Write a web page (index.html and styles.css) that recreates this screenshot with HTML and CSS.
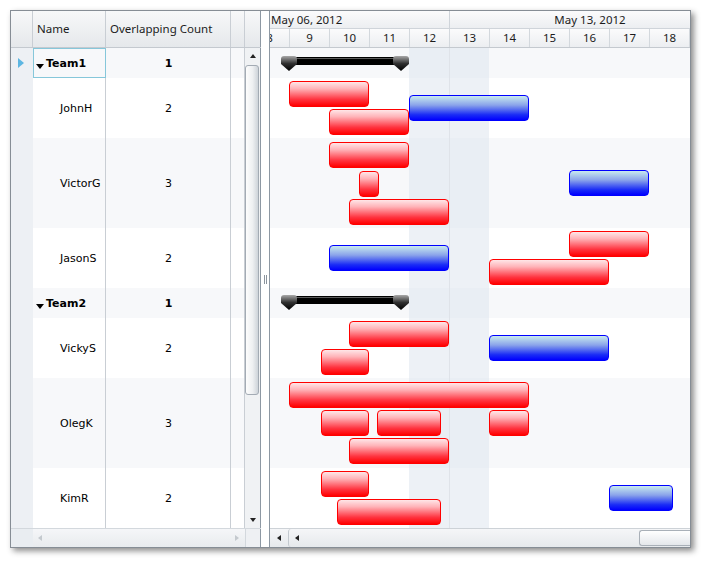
FILE: index.html
```html
<!DOCTYPE html>
<html>
<head>
    <meta name="viewport" content="width=device-width, initial-scale=1.0">
    <title>Gantt - Overlapping Tasks</title>
    <link rel="stylesheet" href="styles.css">
</head>
<body>
    <div class="gantt">
        <div class="grid">
            <div class="grid-head">
                <div class="hcell ind"></div>
                <div class="hcell name">Name</div>
                <div class="hcell count">Overlapping Count</div>
                <div class="hcell pad"></div>
                <div class="hcell vs"></div>
            </div>
            <div class="grid-body">
                <div class="rows">
                    <div class="row alt h30">
                        <div class="ind"><span class="cur"></span></div>
                        <div class="cell name group selected"><span class="tri"></span>Team1</div>
                        <div class="cell count group">1</div>
                        <div class="cell pad"></div>
                    </div>
                    <div class="row h60">
                        <div class="ind"></div>
                        <div class="cell name">JohnH</div>
                        <div class="cell count">2</div>
                        <div class="cell pad"></div>
                    </div>
                    <div class="row alt h90">
                        <div class="ind"></div>
                        <div class="cell name">VictorG</div>
                        <div class="cell count">3</div>
                        <div class="cell pad"></div>
                    </div>
                    <div class="row h60">
                        <div class="ind"></div>
                        <div class="cell name">JasonS</div>
                        <div class="cell count">2</div>
                        <div class="cell pad"></div>
                    </div>
                    <div class="row alt h30">
                        <div class="ind"></div>
                        <div class="cell name group"><span class="tri"></span>Team2</div>
                        <div class="cell count group">1</div>
                        <div class="cell pad"></div>
                    </div>
                    <div class="row h60">
                        <div class="ind"></div>
                        <div class="cell name">VickyS</div>
                        <div class="cell count">2</div>
                        <div class="cell pad"></div>
                    </div>
                    <div class="row alt h90">
                        <div class="ind"></div>
                        <div class="cell name">OlegK</div>
                        <div class="cell count">3</div>
                        <div class="cell pad"></div>
                    </div>
                    <div class="row h60">
                        <div class="ind"></div>
                        <div class="cell name">KimR</div>
                        <div class="cell count">2</div>
                        <div class="cell pad"></div>
                    </div>
                </div>
                <div class="vscroll">
                    <div class="sb-btn"><span class="arr up"></span></div>
                    <div class="thumb"></div>
                    <div class="sb-space"></div>
                    <div class="sb-btn"><span class="arr down"></span></div>
                </div>
            </div>
            <div class="grid-foot">
                <div class="gf-corner"></div>
                <div class="gf-track">
                    <span class="arr left faint"></span>
                    <span class="arr right faint"></span>
                </div>
                <div class="gf-corner2"></div>
            </div>
        </div>

        <div class="splitter"><span class="grip"></span></div>

        <div class="chart">
            <div class="weeks">
                <div class="week first">May 06, 2012</div>
                <div class="week second">May 13, 2012</div>
            </div>
            <div class="days" id="days"></div>
            <div class="chart-body" id="chart-body">
                <div class="weekend"></div>
            </div>
            <div class="chart-foot">
                <div class="cf-btn"><span class="arr left"></span></div>
                <div class="cf-page"><span class="arr left"></span></div>
                <div class="cf-thumb"></div>
            </div>
        </div>
    </div>

    <script>
        // x = pixels from the left edge of the visible chart, day 9 starts at 19, 40px per day
        const rows = [
            { h: 30, alt: true, summary: { left: 11, top: 8 } },
            { h: 60, bars: [["red", 19, 80, 3], ["red", 59, 80, 31], ["blue", 139, 120, 17]] },
            { h: 90, alt: true, bars: [["red", 59, 80, 4], ["red", 89, 20, 33], ["red", 79, 100, 61], ["blue", 299, 80, 32]] },
            { h: 60, bars: [["blue", 59, 120, 17], ["red", 299, 80, 3], ["red", 219, 120, 31]] },
            { h: 30, alt: true, summary: { left: 11, top: 7 } },
            { h: 60, bars: [["red", 79, 100, 3], ["red", 51, 48, 31], ["blue", 219, 120, 17]] },
            { h: 90, alt: true, bars: [["red", 19, 240, 4], ["red", 51, 48, 32], ["red", 107, 64, 32], ["red", 219, 40, 32], ["red", 79, 100, 60]] },
            { h: 60, bars: [["red", 51, 48, 3], ["red", 67, 104, 31], ["blue", 339, 64, 17]] }
        ];

        const days = document.getElementById("days");
        for (let d = 8; d <= 18; d++) {
            const cell = document.createElement("div");
            cell.className = "day";
            cell.textContent = d;
            days.appendChild(cell);
        }

        function summarySvg(id) {
            const cap = "M0 3Q0 0 3 0H13Q16 0 16 3V8L8 15L0 8Z";
            return '<svg width="128" height="15" viewBox="0 0 128 15">' +
                '<defs><linearGradient id="' + id + '" x1="0" y1="0" x2="0" y2="1">' +
                '<stop offset="0" stop-color="#a8a8a8"/><stop offset="0.5" stop-color="#303030"/><stop offset="1" stop-color="#000"/>' +
                '</linearGradient></defs>' +
                '<rect x="12" y="1" width="104" height="8" fill="#000"/>' +
                '<rect x="12" y="2" width="104" height="1" fill="#5a5a5a"/>' +
                '<path d="' + cap + '" fill="url(#' + id + ')"/>' +
                '<path d="' + cap + '" transform="translate(112 0)" fill="url(#' + id + ')"/>' +
                '</svg>';
        }

        const body = document.getElementById("chart-body");
        rows.forEach((row, i) => {
            const r = document.createElement("div");
            r.className = "crow" + (row.alt ? " alt" : "");
            r.style.height = row.h + "px";
            if (row.summary) {
                const s = document.createElement("div");
                s.className = "summary";
                s.style.left = row.summary.left + "px";
                s.style.top = row.summary.top + "px";
                s.innerHTML = summarySvg("sg" + i);
                r.appendChild(s);
            }
            (row.bars || []).forEach(b => {
                const bar = document.createElement("div");
                bar.className = "bar " + b[0];
                bar.style.left = b[1] + "px";
                bar.style.width = b[2] + "px";
                bar.style.top = b[3] + "px";
                r.appendChild(bar);
            });
            body.appendChild(r);
        });
    </script>
</body>
</html>
```

FILE: styles.css
```css
body {
    margin: 0;
    padding: 10px;
    background: #fff;
    font-family: "DejaVu Sans", Verdana, sans-serif;
    font-size: 11px;
    color: #000;
}
.gantt {
    display: flex;
    width: 681px;
    height: 538px;
    box-sizing: border-box;
    border: 1px solid #868d95;
    background: #fff;
    box-shadow: 3px 3px 6px rgba(0, 0, 0, 0.45);
}

/* left grid */
.grid {
    width: 250px;
    display: flex;
    flex-direction: column;
}
.grid-head {
    display: flex;
    height: 37px;
    box-sizing: border-box;
    border-bottom: 1px solid #c4c9cf;
    background: linear-gradient(#f7f8f9, #e5e8eb);
}
.hcell {
    box-sizing: border-box;
    border-right: 1px solid #c9ced4;
    line-height: 35px;
    padding-left: 4px;
    font-family: "Noto Sans", sans-serif;
    font-size: 11.5px;
    color: #1c1c1c;
    white-space: nowrap;
}
.hcell.ind { width: 22px; }
.hcell.name { width: 73px; }
.hcell.count { width: 125px; }
.hcell.pad { width: 14px; }
.hcell.vs { width: 16px; border-right-color: #8d98a3; }

.grid-body {
    display: flex;
    height: 480px;
}
.rows {
    width: 234px;
}
.row {
    display: flex;
}
.row.alt { background: #f7f8fa; }
.h30 { height: 30px; }
.h60 { height: 60px; }
.h90 { height: 90px; }
.row .ind {
    width: 22px;
    flex: none;
    background: #edf0f4;
    display: flex;
    align-items: center;
    justify-content: center;
}
.cur {
    width: 0;
    height: 0;
    border-left: 6px solid #5db6e2;
    border-top: 5px solid transparent;
    border-bottom: 5px solid transparent;
    margin-left: -2px;
}
.cell {
    box-sizing: border-box;
    border-right: 1px solid #c9ced4;
    display: flex;
    align-items: center;
    flex: none;
}
.cell.name {
    width: 73px;
    padding-left: 27px;
}
.cell.count {
    width: 125px;
    justify-content: center;
    padding-left: 1px;
}
.cell.pad { width: 14px; }
.group { font-weight: bold; }
.cell.name.group { padding-left: 3px; }
.selected {
    outline: 1px solid #86c7da;
    outline-offset: -1px;
}
.tri {
    width: 0;
    height: 0;
    border-left: 4px solid transparent;
    border-right: 4px solid transparent;
    border-top: 5px solid #000;
    margin: 7px 2px 0 0;
}

.vscroll {
    width: 16px;
    box-sizing: border-box;
    border-right: 1px solid #8d98a3;
    background: #f0f2f4;
    display: flex;
    flex-direction: column;
}
.sb-btn {
    height: 16px;
    display: flex;
    align-items: center;
    justify-content: center;
}
.thumb {
    height: 328px;
    margin: 1px 1px 0 0;
    border: 1px solid #a3abb4;
    border-radius: 3px;
    background: linear-gradient(90deg, #fdfdfd, #eef0f2 55%, #cdd3d9);
}
.sb-space { flex: 1; }

.arr {
    width: 0;
    height: 0;
    display: inline-block;
}
.arr.up {
    border-left: 3.5px solid transparent;
    border-right: 3.5px solid transparent;
    border-bottom: 4px solid #222;
}
.arr.down {
    border-left: 3.5px solid transparent;
    border-right: 3.5px solid transparent;
    border-top: 4px solid #222;
}
.arr.left {
    border-top: 3.5px solid transparent;
    border-bottom: 3.5px solid transparent;
    border-right: 4px solid #222;
}
.arr.right {
    border-top: 3.5px solid transparent;
    border-bottom: 3.5px solid transparent;
    border-left: 4px solid #222;
}
.arr.faint.left { border-right-color: #c4c9ce; }
.arr.faint.right { border-left-color: #c4c9ce; }

.grid-foot {
    display: flex;
    height: 19px;
    box-sizing: border-box;
    border-top: 1px solid #d3d8dd;
}
.gf-corner {
    width: 22px;
    background: #e9edf1;
}
.gf-track {
    width: 212px;
    display: flex;
    align-items: center;
    justify-content: space-between;
    padding: 0 6px 0 5px;
    box-sizing: border-box;
    background: linear-gradient(#f5f6f8, #e8ebee);
}
.gf-corner2 {
    width: 16px;
    box-sizing: border-box;
    border-right: 1px solid #8d98a3;
    border-left: 1px solid #d3d8dd;
    background: #eef0f3;
}

/* splitter */
.splitter {
    width: 9px;
    box-sizing: border-box;
    border-right: 1px solid #8d98a3;
    background: #fff;
    display: flex;
    align-items: center;
    justify-content: center;
}
.grip {
    width: 1px;
    height: 9px;
    border-left: 1px solid #8a939c;
    border-right: 1px solid #8a939c;
}

/* chart */
.chart {
    width: 420px;
    display: flex;
    flex-direction: column;
    overflow: hidden;
}
.weeks {
    display: flex;
    height: 18px;
    box-sizing: border-box;
    border-bottom: 1px solid #cfd4da;
    background: linear-gradient(#fbfbfc, #eceef1);
    font-family: "Noto Sans", sans-serif;
    font-size: 11.5px;
    line-height: 17px;
    color: #1c1c1c;
}
.week {
    flex: none;
    box-sizing: border-box;
    white-space: nowrap;
}
.week.first {
    width: 180px;
    padding-left: 1px;
    border-right: 1px solid #cfd4da;
}
.week.second {
    width: 280px;
    text-align: center;
}
.days {
    display: flex;
    height: 19px;
    margin-left: -20px;
    box-sizing: border-box;
    border-bottom: 1px solid #c4c9cf;
    background: linear-gradient(#fbfbfc, #eceef1);
    font-family: "Noto Sans", sans-serif;
    font-size: 11.5px;
    line-height: 18px;
    color: #1c1c1c;
}
.day {
    width: 40px;
    flex: none;
    box-sizing: border-box;
    border-right: 1px solid #d3d8dd;
    text-align: center;
}
.chart-body {
    position: relative;
    height: 480px;
}
.crow {
    position: relative;
}
.crow.alt { background: #f7f8fa; }
.weekend {
    position: absolute;
    left: 139px;
    top: 0;
    width: 80px;
    height: 100%;
    background: rgba(222, 229, 239, 0.55);
    z-index: 1;
}
.weekend::after {
    content: "";
    position: absolute;
    left: 40px;
    top: 0;
    width: 1px;
    height: 100%;
    background: #dfe3e9;
}
.bar {
    position: absolute;
    height: 26px;
    box-sizing: border-box;
    border-radius: 4px;
    z-index: 2;
}
.bar.red {
    border: 1px solid #ff0000;
    background: linear-gradient(#ffe6e8, #ffb3b8 28%, #ff3440 72%, #ff0000);
}
.bar.blue {
    border: 1px solid #0000ff;
    background: linear-gradient(#c8eaee, #8aa3ea 38%, #1a2cf6 78%, #0000ff);
}
.summary {
    position: absolute;
    z-index: 2;
    height: 15px;
}
.summary svg { display: block; }

.chart-foot {
    display: flex;
    height: 19px;
    box-sizing: border-box;
    border-top: 1px solid #cdd2d7;
    background: linear-gradient(#f5f6f8, #e6e9ec);
}
.cf-btn {
    width: 18px;
    display: flex;
    align-items: center;
    justify-content: center;
}
.cf-page {
    flex: 1;
    display: flex;
    align-items: center;
    padding-left: 6px;
    border-left: 1px solid #c3c9cf;
    border-radius: 3px 0 0 3px;
}
.cf-thumb {
    width: 50px;
    margin: 1px 0 1px 0;
    border: 1px solid #a9b0b8;
    border-right: none;
    border-radius: 3px 0 0 3px;
    background: linear-gradient(#ffffff, #e4e7eb);
}
```
